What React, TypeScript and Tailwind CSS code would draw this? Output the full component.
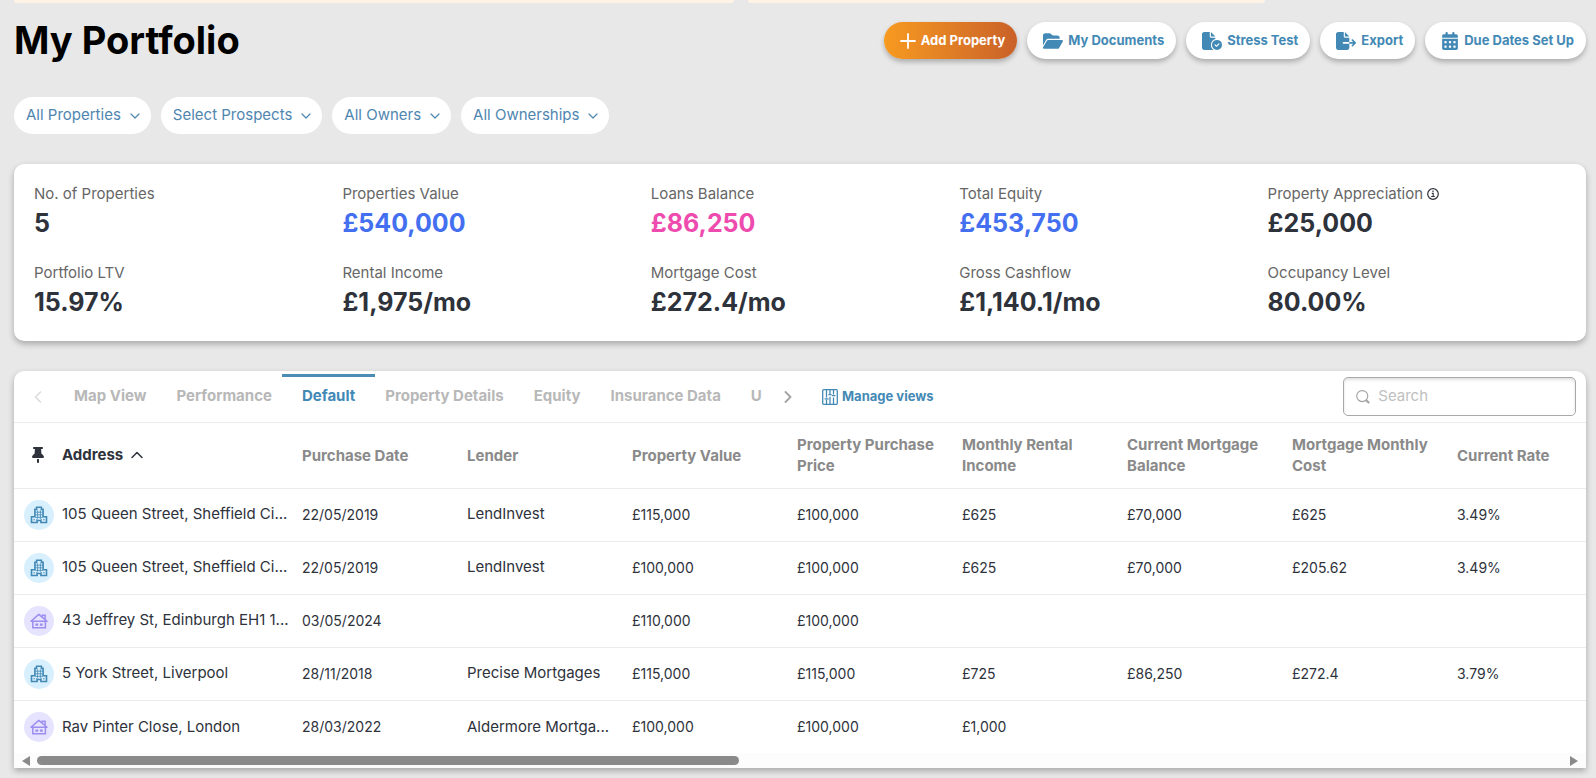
import type { ReactNode } from "react";
import {
  FaCalendarDays,
  FaFileCircleCheck,
  FaFileExport,
  FaFolderOpen,
  FaThumbtack,
} from "react-icons/fa6";
import { ChevronDown, ChevronLeft, ChevronRight, ChevronUp } from "lucide-react";

type PropertyKind = "flat" | "house";

interface PropertyRow {
  kind: PropertyKind;
  address: string;
  lender: string;
  purchaseDate: string;
  figures: string[];
}

const FILTERS = ["All Properties", "Select Prospects", "All Owners", "All Ownerships"];

const STATS = [
  { label: "No. of Properties", value: "5", tone: "text-[#2e323b]" },
  { label: "Properties Value", value: "£540,000", tone: "text-[#436ff0]" },
  { label: "Loans Balance", value: "£86,250", tone: "text-[#ee4bae]" },
  { label: "Total Equity", value: "£453,750", tone: "text-[#436ff0]" },
  { label: "Property Appreciation", value: "£25,000", tone: "text-[#2e323b]", info: true },
  { label: "Portfolio LTV", value: "15.97%", tone: "text-[#2e323b]" },
  { label: "Rental Income", value: "£1,975/mo", tone: "text-[#2e323b]" },
  { label: "Mortgage Cost", value: "£272.4/mo", tone: "text-[#2e323b]" },
  { label: "Gross Cashflow", value: "£1,140.1/mo", tone: "text-[#2e323b]" },
  { label: "Occupancy Level", value: "80.00%", tone: "text-[#2e323b]" },
];

const TABS = ["Map View", "Performance", "Default", "Property Details", "Equity", "Insurance Data", "U"];

const COLUMNS = [
  "Purchase Date",
  "Lender",
  "Property Value",
  "Property Purchase Price",
  "Monthly Rental Income",
  "Current Mortgage Balance",
  "Mortgage Monthly Cost",
  "Current Rate",
];

const ROWS: PropertyRow[] = [
  {
    kind: "flat",
    address: "105 Queen Street, Sheffield Ci...",
    purchaseDate: "22/05/2019",
    lender: "LendInvest",
    figures: ["£115,000", "£100,000", "£625", "£70,000", "£625", "3.49%"],
  },
  {
    kind: "flat",
    address: "105 Queen Street, Sheffield Ci...",
    purchaseDate: "22/05/2019",
    lender: "LendInvest",
    figures: ["£100,000", "£100,000", "£625", "£70,000", "£205.62", "3.49%"],
  },
  {
    kind: "house",
    address: "43 Jeffrey St, Edinburgh EH1 1...",
    purchaseDate: "03/05/2024",
    lender: "",
    figures: ["£110,000", "£100,000", "", "", "", ""],
  },
  {
    kind: "flat",
    address: "5 York Street, Liverpool",
    purchaseDate: "28/11/2018",
    lender: "Precise Mortgages",
    figures: ["£115,000", "£115,000", "£725", "£86,250", "£272.4", "3.79%"],
  },
  {
    kind: "house",
    address: "Rav Pinter Close, London",
    purchaseDate: "28/03/2022",
    lender: "Aldermore Mortga...",
    figures: ["£100,000", "£100,000", "£1,000", "", "", ""],
  },
];

function PlusIcon() {
  return (
    <svg width="16" height="16" viewBox="0 0 16 16" fill="none" stroke="currentColor" strokeWidth="1.8" strokeLinecap="round">
      <path d="M8 1v14M1 8h14" />
    </svg>
  );
}

function InfoIcon() {
  return (
    <svg width="12" height="12" viewBox="0 0 12 12" fill="none" stroke="#2e323b">
      <circle cx="6" cy="6" r="5.3" strokeWidth="1.2" />
      <path d="M4.8 5.4h1.4v3M4.2 8.5h3.6" strokeWidth="1.1" />
      <circle cx="6" cy="3.3" r="0.8" fill="#2e323b" stroke="none" />
    </svg>
  );
}

function ManageIcon() {
  return (
    <svg width="16" height="16" viewBox="0 0 16 16" fill="none" stroke="currentColor" strokeWidth="1.3">
      <rect x="0.7" y="0.7" width="14.6" height="14.6" rx="1" />
      <path d="M4.5 1v7.4M4.5 10.8V15M2.6 9.8h4M8 1v4M6.4 5.6h3.2M8 7.8V15M11.5 1v4.6M9.8 6.6h3.6M11.5 8.6V15" />
    </svg>
  );
}

function SearchIcon() {
  return (
    <svg width="16" height="16" viewBox="0 0 16 16" fill="none" stroke="#a3a3a3">
      <circle cx="7" cy="7" r="6.2" strokeWidth="1.3" />
      <path d="M11.5 11.8l3.3 3" strokeWidth="2.4" />
    </svg>
  );
}

function FlatIcon() {
  return (
    <svg width="18" height="18" viewBox="0 0 18 18" fill="none" stroke="#4389b5" strokeWidth="1.6">
      <path d="M4.9 11V3.4h1.7V1.3h4.8v2.1h1.7V11" />
      <path d="M5 10.8H1.5v5.7h5.6v-2h3.8v2h5.6v-5.7H13" />
      <path d="M7.6 4.4v8.4M10.4 4.4v8.4M5 6.2h8M5 8.8h8M5 11.4h8" strokeWidth="0.8" />
      <path d="M3.4 13.7h1.5M6.2 13.7h1.2M10.6 13.7h1.2M13.1 13.7h1.5" strokeWidth="1.1" />
    </svg>
  );
}

function HouseIcon() {
  return (
    <svg width="18" height="18" viewBox="0 0 18 18" fill="none" stroke="#9a8ff0" strokeWidth="1.5">
      <path d="M1 9.3L8.8 2.4l8.2 6.9z" strokeLinejoin="round" />
      <path d="M12.2 4.9V3.2h2.9v4M2.8 9.6v6.2h12.6V9.6" />
      <path d="M5.4 12.6h2.8M9.9 12.6h2.8" strokeWidth="2.4" />
    </svg>
  );
}

function ActionButton({ icon, children, primary = false }: { icon: ReactNode; children: string; primary?: boolean }) {
  return (
    <button
      type="button"
      className={`flex h-[37px] items-center gap-[5px] rounded-full pr-3 pl-4 text-[13px] font-bold whitespace-nowrap shadow-[0_3px_5px_rgba(0,0,0,0.25)] ${
        primary ? "bg-linear-to-r from-[#f79a1f] to-[#c96128] text-white" : "bg-white text-[#4389b5]"
      }`}
    >
      {icon}
      {children}
    </button>
  );
}

function PropertyBadge({ kind }: { kind: PropertyKind }) {
  return (
    <span
      className={`flex size-[30px] shrink-0 items-center justify-center rounded-full ${
        kind === "flat" ? "bg-[#d8effd]" : "bg-[#e5e3fe]"
      }`}
    >
      {kind === "flat" ? <FlatIcon /> : <HouseIcon />}
    </span>
  );
}

function PortfolioTable() {
  return (
    <table className="w-full min-w-[1598px] table-fixed border-collapse text-left text-[14px] whitespace-nowrap text-[#2e323b]">
      <thead>
        <tr className="h-[65px] border-b border-[#ebebeb] text-[15px]">
          <th className="w-[278px] pr-2.5 pl-4">
            <div className="flex items-center">
              <FaThumbtack className="size-4" />
              <button type="button" className="ml-4 flex items-center gap-1 font-bold">
                Address
                <ChevronUp size={20} strokeWidth={1.8} />
              </button>
            </div>
          </th>
          {COLUMNS.map((c) => (
            <th key={c} className="w-[165px] px-2.5 leading-[21px] font-bold whitespace-normal text-[#8a8a8a]">
              {c}
            </th>
          ))}
        </tr>
      </thead>
      <tbody>
        {ROWS.map((row, i) => (
          <tr key={i} className="h-[53px] border-b border-[#ebebeb] last:border-b-0">
            <td className="pl-2.5">
              <div className="flex items-center gap-2">
                <PropertyBadge kind={row.kind} />
                <span className="text-[15px]">{row.address}</span>
              </div>
            </td>
            <td className="px-2.5">{row.purchaseDate}</td>
            <td className="px-2.5 text-[15px]">{row.lender}</td>
            {row.figures.map((figure, j) => (
              <td key={j} className="px-2.5">
                {figure}
              </td>
            ))}
          </tr>
        ))}
      </tbody>
    </table>
  );
}

export default function App() {
  return (
    <div className="min-h-screen overflow-hidden bg-[#e8e8e8] pr-2.5 pb-2.5 pl-3.5 font-['Inter',sans-serif]">
      {/* bottom edge of the notice cards above */}
      <div className="flex gap-3.5">
        <div className="h-[3px] w-[720px] rounded-b-[10px] bg-[#fff3e6]" />
        <div className="h-[3px] w-[517px] rounded-b-[10px] bg-[#fff3e6]" />
      </div>

      <header className="mt-[19px] flex items-center justify-between">
        <h1 className="text-[38px] leading-[37px] font-bold text-black">My Portfolio</h1>
        <div className="flex gap-2.5">
          <ActionButton primary icon={<PlusIcon />}>
            Add Property
          </ActionButton>
          <ActionButton icon={<FaFolderOpen size={20} />}>My Documents</ActionButton>
          <ActionButton icon={<FaFileCircleCheck size={20} />}>Stress Test</ActionButton>
          <ActionButton icon={<FaFileExport size={20} />}>Export</ActionButton>
          <ActionButton icon={<FaCalendarDays size={18} />}>Due Dates Set Up</ActionButton>
        </div>
      </header>

      <div className="mt-[38px] flex gap-2.5">
        {FILTERS.map((f) => (
          <button
            key={f}
            type="button"
            className="flex h-[37px] items-center gap-1.5 rounded-full bg-white pr-2 pl-3 text-[15px] text-[#4f86b0]"
          >
            {f}
            <ChevronDown size={16} strokeWidth={1.8} />
          </button>
        ))}
      </div>

      <section className="mt-[30px] grid grid-cols-5 gap-y-[25px] rounded-[10px] bg-white pt-5 pr-2.5 pb-6 pl-5 shadow-[0_3px_6px_rgba(0,0,0,0.28)]">
        {STATS.map((s) => (
          <div key={s.label}>
            <div className="flex items-center gap-1 text-[15px] leading-5 text-[#666]">
              {s.label}
              {s.info && <InfoIcon />}
            </div>
            <div className={`mt-1 text-[25px] leading-[30px] font-bold ${s.tone}`}>{s.value}</div>
          </div>
        ))}
      </section>

      <section className="mt-[30px] overflow-hidden rounded-t-[10px] bg-white shadow-[0_3px_6px_rgba(0,0,0,0.28)]">
        <div className="flex h-[52px] items-center border-b border-[#ebebeb]">
          <button type="button" aria-label="Previous tabs" className="ml-3.5 text-[#dcdcdc]">
            <ChevronLeft size={20} strokeWidth={2} />
          </button>
          <nav className="ml-[11px] flex h-full w-[703px] overflow-hidden">
            {TABS.map((t) => (
              <button
                key={t}
                type="button"
                className={`relative h-full shrink-0 px-[15px] text-[15px] font-bold ${
                  t === "Default" ? "text-[#4389b5]" : "text-[#b8b8b8]"
                }`}
              >
                {t === "Default" && <span className="absolute inset-x-[-5px] top-[3px] h-[3px] bg-[#4b8cb5]" />}
                {t}
              </button>
            ))}
          </nav>
          <button type="button" aria-label="Next tabs" className="ml-4 text-[#a3a3a3]">
            <ChevronRight size={20} strokeWidth={2.2} />
          </button>
          <button type="button" className="ml-6 flex items-center gap-1 text-[13px] font-bold text-[#4389b5]">
            <ManageIcon />
            Manage views
          </button>
          <label className="mr-2.5 ml-auto flex h-[39px] w-[233px] items-center gap-2 rounded-[5px] border border-[#a8a8a8] px-3 shadow-[inset_0_2px_3px_rgba(0,0,0,0.12)]">
            <SearchIcon />
            <input
              type="search"
              aria-label="Search"
              placeholder="Search"
              className="w-full min-w-0 bg-transparent text-[15px] outline-none placeholder:text-[#c0c0c0]"
            />
          </label>
        </div>

        <div className="overflow-hidden">
          <PortfolioTable />
        </div>

        <div className="flex h-[15px] items-center bg-[#fcfcfc] px-2 text-[#8a8a8a]">
          <svg width="8" height="10" viewBox="0 0 8 10" fill="currentColor">
            <path d="M8 0v10L0 5z" />
          </svg>
          <div className="mx-[7px] flex-1">
            <div className="h-[9px] w-[46%] rounded-full bg-[#8a8a8a]" />
          </div>
          <svg width="8" height="10" viewBox="0 0 8 10" fill="currentColor">
            <path d="M0 0v10l8-5z" />
          </svg>
        </div>
      </section>
    </div>
  );
}
